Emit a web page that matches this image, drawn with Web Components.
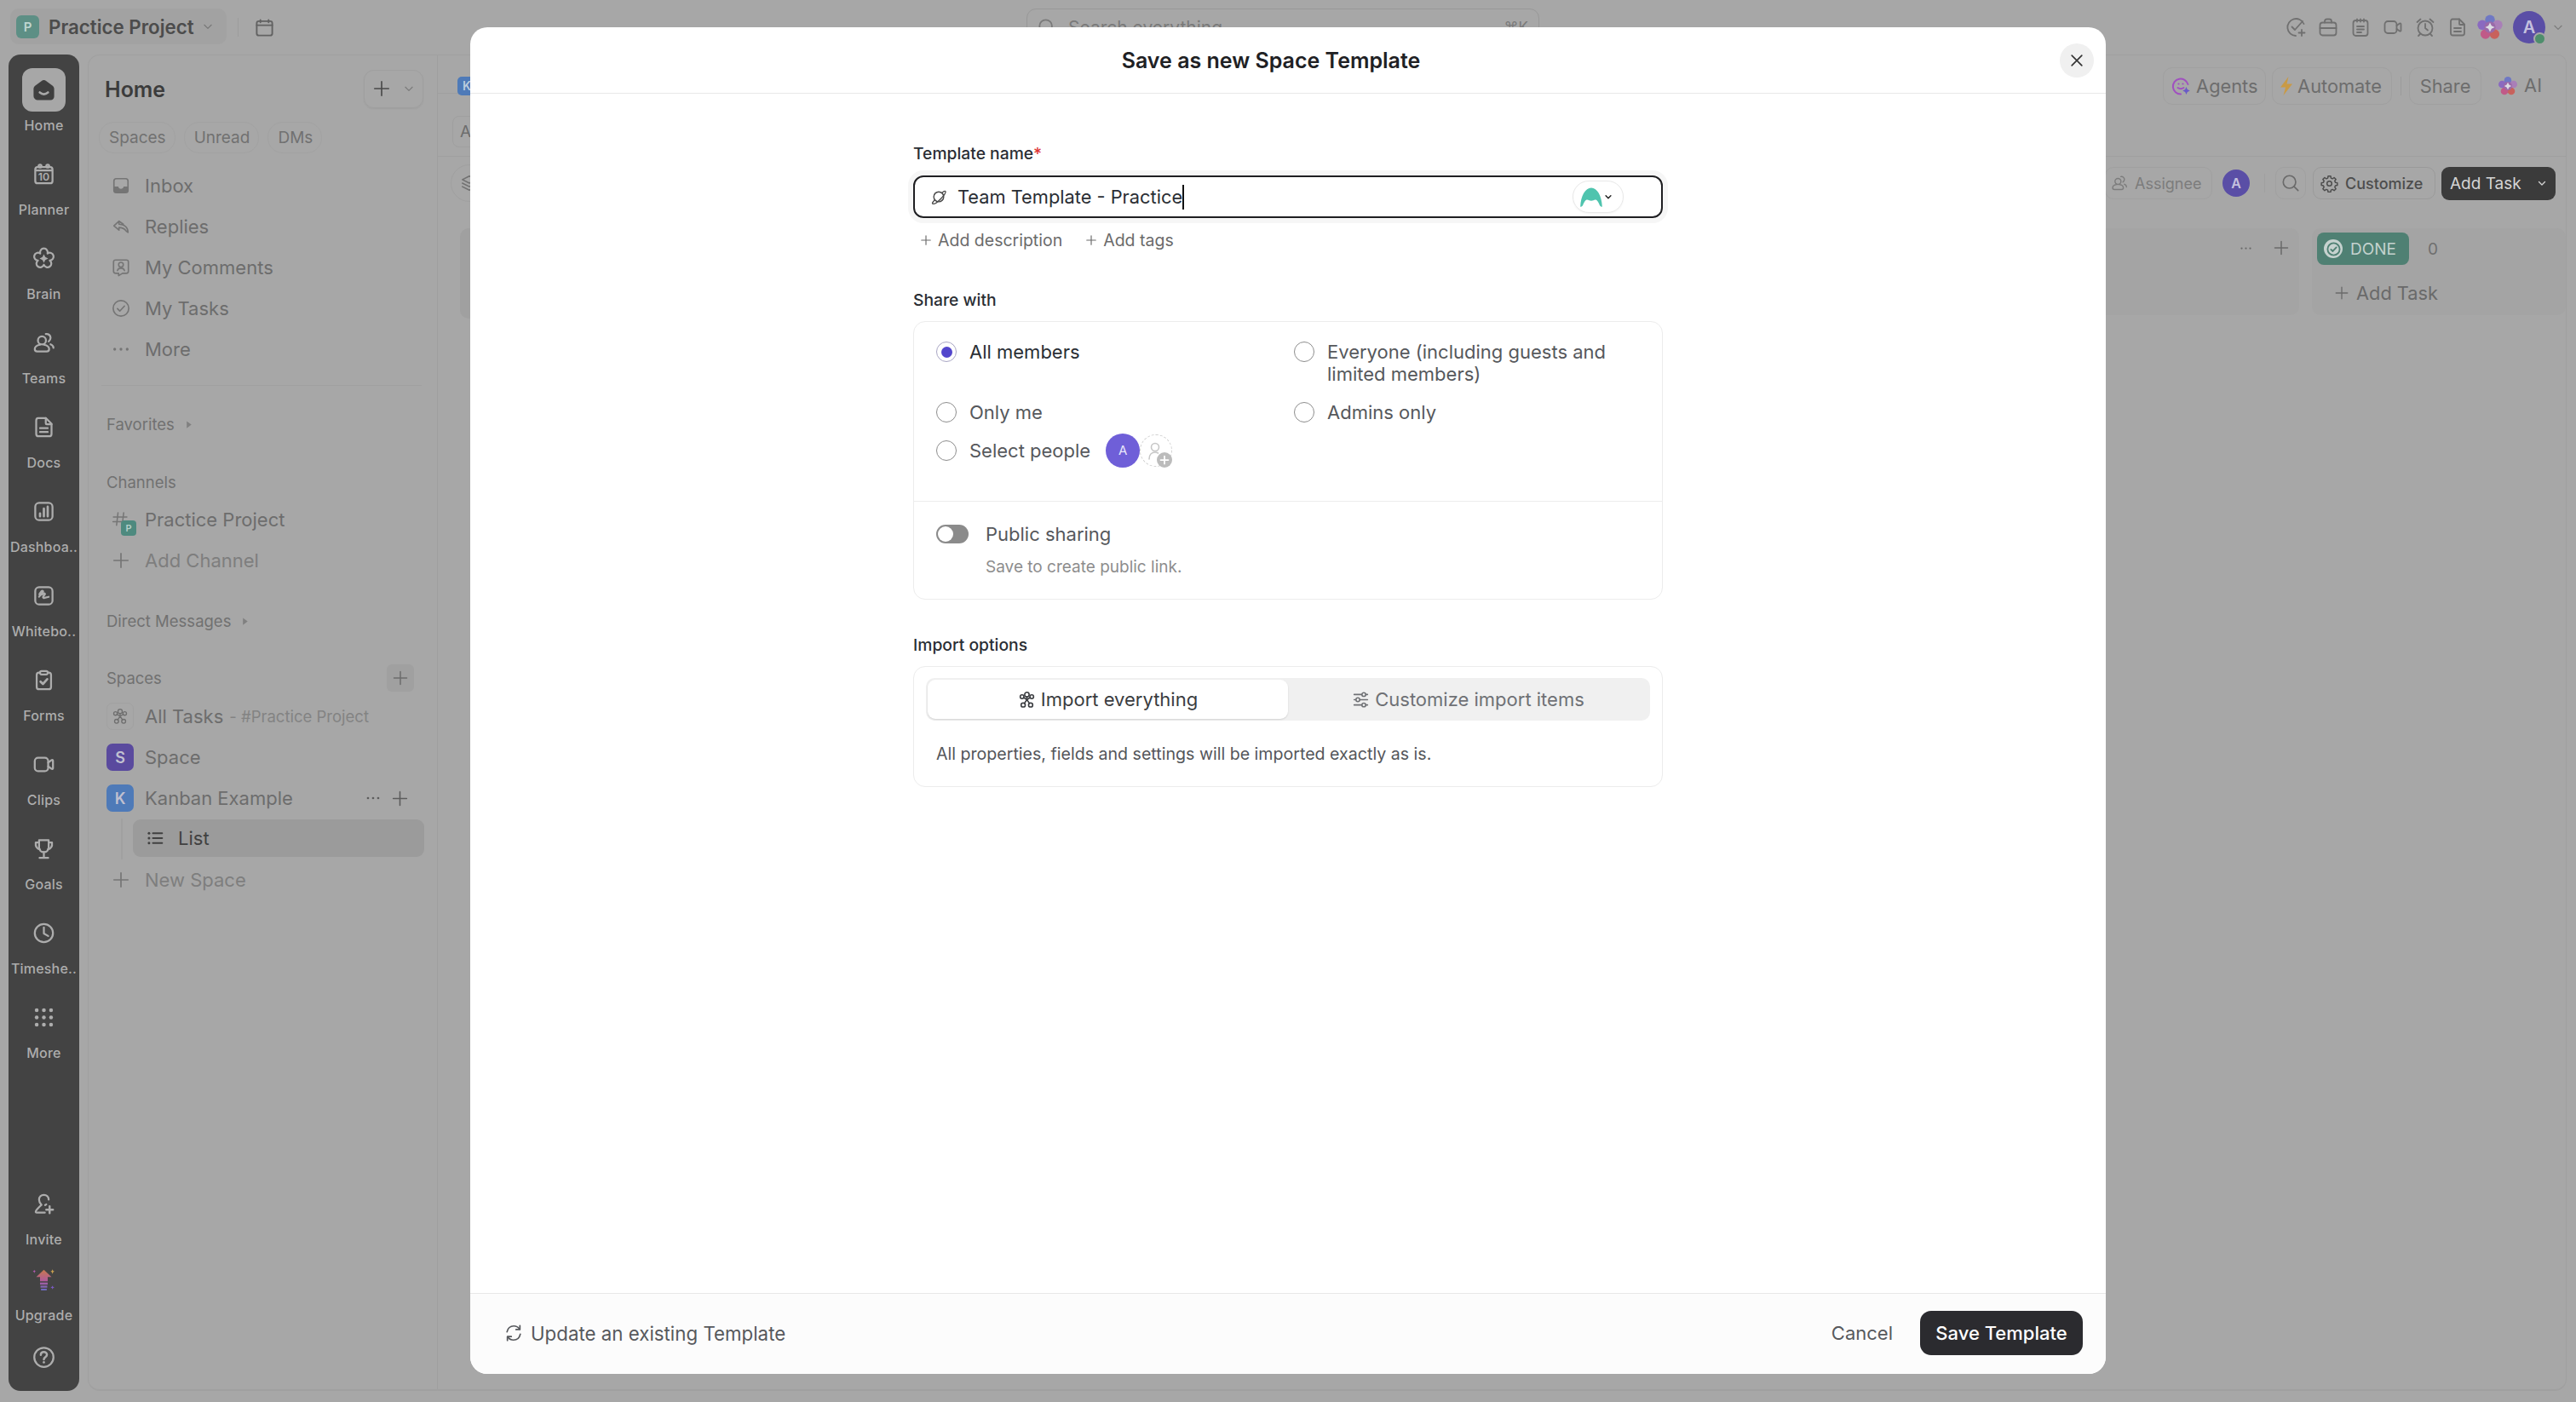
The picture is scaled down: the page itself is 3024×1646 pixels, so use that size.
<!DOCTYPE html>
<html lang="en">
<head>
<meta charset="utf-8">
<title>Save as new Space Template</title>
<style>
  html, body { margin: 0; width: 3024px; height: 1646px; overflow: hidden; background: #a7a7a7; font-family: Inter, "Liberation Sans", sans-serif; }
</style>
</head>
<body>
<app-page></app-page>
<script>
// petals of the brain logo, outlined
function flower(cx, cy, n, R, rise) {
    let d = "";
    for (let i = 0; i < n; i++) {
        const a = (i / n) * Math.PI * 2 - Math.PI / 2 - Math.PI / n;
        const b = ((i + 1) / n) * Math.PI * 2 - Math.PI / 2 - Math.PI / n;
        const p = [cx + R * Math.cos(a), cy + R * Math.sin(a)].map(v => v.toFixed(2));
        const q = [cx + R * Math.cos(b), cy + R * Math.sin(b)].map(v => v.toFixed(2));
        d += (i === 0 ? `M${p[0]} ${p[1]}` : "") + `A${rise} ${rise} 0 1 1 ${q[0]} ${q[1]}`;
    }
    return d + "Z";
}

const ICONS = {
    home: `<path fill="currentColor" stroke="none" d="M12 2.5c.8 0 1.500.3 2.100.8l6.200 4.600c1 .8 1.700 1.800 1.700 3.100v7.500c0 2-1.500 3.500-3.500 3.500h-13C3.500 21.500 2 20 2 18v-7c0-1.300.7-2.300 1.700-3.100l6.200-4.600c.6-.5 1.300-.8 2.100-.8z"/><path stroke="#a7a7a7" stroke-width="2.200" d="M8 14.500q4 3.500 8 0"/>`,
    planner: `<rect x="3" y="4.500" width="18" height="17" rx="2.500"/><path d="M3.500 8h17"/><circle cx="8" cy="3.500" r="1.500"/><circle cx="16" cy="3.500" r="1.500"/><text x="12" y="19" font-size="11" font-weight="600" text-anchor="middle" fill="currentColor" stroke="none" font-family="Inter, sans-serif">10</text>`,
    brain: `<path d="${flower(12, 12, 5, 6.500, 4)}"/><path fill="currentColor" stroke="none" d="M12 7.500l1.500 3 3 1.500-3 1.500-1.500 3-1.500-3-3-1.500 3-1.500z"/>`,
    teams: `<circle cx="10" cy="9.500" r="4.200"/><path d="M8 14c-3 .5-5.500 2-5.500 4.500 0 1.500 1 2.500 2.500 2.500h10c1.500 0 2.500-1 2.500-2.500 0-2.500-2.500-4-5.500-4.500"/><path d="M14 2.800c2.500-.5 5 1.200 5 3.900 0 1.700-1 3-2 3.800"/><path d="M19 13.500c1.500.6 3 1.800 3 3.800"/>`,
    doc: `<path d="M6 2.500h8l6 6V19c0 1.500-1 2.500-2.500 2.500h-11C5 21.500 4 20.500 4 19V5c0-1.500.8-2.500 2-2.500z"/><path d="M14 2.500V8c0 .5.300 1 1 1h5M8 13h8M8 17h8"/>`,
    dash: `<rect x="3" y="3" width="18" height="18" rx="4"/><path stroke-width="2.400" d="M8 17v-3M12 17V9M16 17V7"/>`,
    board: `<rect x="3" y="3" width="18" height="18" rx="4"/><path d="M7 13l4-5c.8-1-.8-1.600-1.500-.8L7.500 10c-.5.800.5 1.500 1.300 1l3.200-1.500c1-.4 1.500.6.800 1.300l-1.500 2c-.7 1 .3 1.700 1.300 1.300l4.400-1"/>`,
    forms: `<path d="M8 4H7C5.500 4 4.500 5 4.500 6.500V19c0 1.500 1 2.500 2.500 2.500h10c1.500 0 2.500-1 2.500-2.500V6.500C19.500 5 18.500 4 17 4h-1"/><rect x="8" y="2.500" width="8" height="3.500" rx="1.500"/><path stroke-width="2.400" d="M8.500 13.500l2.500 2.500 4.500-5"/>`,
    video: `<rect x="2.500" y="5" width="14" height="14" rx="3.500"/><path d="M16.500 10l3.500-2.500c.8-.5 1.500 0 1.500.8v7.400c0 .8-.7 1.300-1.500.8L16.500 14"/>`,
    goals: `<path d="M7 3h10v7.500c0 3-2.200 5-5 5s-5-2-5-5z"/><path d="M7 5.500H3.500C3 10 4.500 12 8 12.800M17 5.500h3.500c.5 4.500-1 6.500-4.500 7.300M12 15.500V21M7.500 21.500h9"/>`,
    clock: `<circle cx="12" cy="12" r="9.500"/><path d="M12 6v6.500l4.500 2.500"/>`,
    grid: `<g fill="currentColor" stroke="none">${[4.500, 12, 19.500].map(y => [4.500, 12, 19.500].map(x => `<circle cx="${x}" cy="${y}" r="2"/>`).join("")).join("")}</g>`,
    invite: `<path d="M17 7.500C17 4.500 14.800 2.500 12 2.500S7 4.500 7 7.500c0 2.500 1.500 4.500 2.500 5.500-1 .8-6.500 6-6 7.500.2.500.8.500 1.500.500h8"/><path d="M14.500 12.500c-.3.3-.7.5-1.200.7"/><path stroke-width="2.200" d="M18 14.500v7M14.500 18h7"/>`,
    help: `<circle cx="12" cy="12" r="10"/><path stroke-width="2.200" d="M8.800 9.500c0-1.900 1.400-3 3.200-3s3.200 1.200 3.200 2.800c0 2.500-3.200 2.500-3.200 5"/><circle cx="12" cy="17.300" r="1.200" fill="currentColor" stroke="none"/>`,
    upgrade: `<defs><linearGradient id="ug" x1="0" y1="0" x2="0" y2="1"><stop offset="0" stop-color="#c8794c"/><stop offset=".55" stop-color="#b05a9c"/><stop offset="1" stop-color="#6a6ac0"/></linearGradient></defs><path fill="url(#ug)" stroke="none" d="M12 1.500L20 9h-4v4.500H8V9H4zM8 14.800h8v2.200H8zM8.500 18.300h7v2H8.500zM9 21.300h6V23H9z"/><path fill="#c8a050" stroke="none" d="M21 1l.7 1.700 1.300.6-1.300.7L21 6l-.7-2-1.300-.7 1.300-.6z"/><path fill="#b05ab0" stroke="none" d="M2 1.500l.5 1.200 1 .5-1 .5L2 5l-.5-1.300-1-.5 1-.5z"/><path fill="#7a5ac0" stroke="none" d="M21 18l.6 1.400 1.400.6-1.400.6L21 22l-.6-1.400-1.400-.6 1.400-.6z"/>`,
    inbox: `<path d="M6 3h12c1.700 0 3 1.300 3 3v12c0 1.700-1.300 3-3 3H6c-1.700 0-3-1.300-3-3V6c0-1.700 1.300-3 3-3z"/><path fill="currentColor" stroke="none" d="M3 13h5.500c.6 2 1.800 3 3.500 3s2.900-1 3.500-3H21v5c0 1.700-1.300 3-3 3H6c-1.700 0-3-1.300-3-3z"/>`,
    reply: `<path d="M9.500 5L3 11l6.500 5.500v-3.200c4 0 6.500.8 9 4.200.8 1 2.500 2 2.500 2 0-6-4-10.500-11.500-10.500z"/><path d="M10 5.500L15 9"/>`,
    comments: `<path d="M5 2.500h14c1.500 0 2.500 1 2.500 2.500v12c0 1.500-1 2.500-2.500 2.500h-5L9 22.500v-3H5c-1.500 0-2.500-1-2.500-2.500V5c0-1.500 1-2.500 2.500-2.500z"/><circle cx="12" cy="8.500" r="3"/><path d="M7.500 16c.5-2 2.300-3 4.500-3s4 1 4.500 3"/>`,
    tick: `<circle cx="12" cy="12" r="10"/><path d="M7.500 12.500l3 3 6-6.500"/>`,
    dots: `<g fill="currentColor" stroke="none"><circle cx="4" cy="12" r="1.800"/><circle cx="12" cy="12" r="1.800"/><circle cx="20" cy="12" r="1.800"/></g>`,
    plus: `<path d="M12 3v18M3 12h18"/>`,
    chev: `<path d="M5 9l7 7 7-7"/>`,
    hash: `<path d="M9 2.500L7 20M17 2.500l-2 17M2.500 8.500h19M2 15h15"/>`,
    spark: `<circle cx="12" cy="5" r="3"/><circle cx="5.500" cy="8" r="2.500"/><circle cx="18.500" cy="8" r="2.500"/><circle cx="7" cy="19" r="2.800"/><circle cx="17" cy="19" r="2.800"/><path d="M12 8v4M7.500 9l4.500 3 4.500-3M12 12l-3.500 5M12 12l3.500 5"/>`,
    list: `<g fill="currentColor" stroke="none"><circle cx="3.500" cy="5" r="1.800"/><circle cx="3.500" cy="12" r="1.800"/><circle cx="3.500" cy="19" r="1.800"/></g><path stroke-width="2.400" d="M9 5h13M9 12h13M9 19h13"/>`,
    calendar: `<rect x="2.500" y="4" width="19" height="17.500" rx="2.500"/><path d="M2.500 9h19M7 2.500v3M17 2.500v3"/>`,
    search: `<circle cx="10.500" cy="10.500" r="8"/><path d="M16.500 16.500l5 5"/>`,
    stack: `<path d="M12 3l9 4.500-9 4.500-9-4.500zM3 12l9 4.500 9-4.500M3 16.500L12 21l9-4.500"/>`,
    checkplus: `<path d="M21.500 8A10 10 0 1 0 12 22"/><path d="M7.500 11.500l3.500 3.500 9-10"/><path d="M19 15v7M15.500 18.500h7"/>`,
    brief: `<rect x="2.500" y="6.500" width="19" height="15" rx="3"/><path d="M8 6.500V5c0-1.500 1-2.500 2.500-2.500h3C15 2.500 16 3.500 16 5v1.500M2.500 13h19"/>`,
    note: `<rect x="3.500" y="4" width="17" height="18" rx="3"/><path d="M8 2.500v3M12 2.500v3M16 2.500v3M8 11h8M8 14.500h8M8 18h5"/>`,
    alarm: `<circle cx="12" cy="13" r="8.500"/><path d="M12 8v5l3 2.500M2.500 6l4-3.500M21.500 6l-4-3.500M6 20l-2 2M18 20l2 2"/>`,
    gear: `<circle cx="12" cy="12" r="3.200"/><path d="M10.300 2.500h3.400l.5 2.700 1.900.8 2.300-1.500 2.300 2.300-1.500 2.300.8 1.900 2.700.5v3.400l-2.700.5-.8 1.900 1.500 2.300-2.300 2.300-2.300-1.500-1.900.8-.5 2.700h-3.400l-.5-2.700-1.900-.8-2.300 1.500-2.300-2.300 1.500-2.300-.8-1.900-2.700-.5v-3.400l2.700-.5.8-1.900-1.500-2.300 2.300-2.300 2.300 1.500 1.900-.8z" transform="translate(0 -.500)"/>`,
    close: `<path d="M5 5l14 14M19 5L5 19"/>`,
    planet: `<circle cx="12" cy="12" r="7"/><path d="M6.500 16.500C3.500 19.500 2.500 21 3.500 21.800c1.500 1 6-1.500 11-6.500s8-9.500 6.800-11C20.500 3.500 19 4.200 16.500 6.500"/>`,
    sync: `<path d="M3.500 10.500C4.500 6 8 3 12.200 3c3 0 5.600 1.500 7.300 3.800"/><path d="M20 2.500v5h-5"/><path d="M20.500 13.500C19.500 18 16 21 11.800 21c-3 0-5.600-1.500-7.300-3.800"/><path d="M4 21.500v-5h5"/>`,
    sliders: `<path d="M3 5h10M19 5h2M3 12h2M11 12h10M3 19h10M19 19h2"/><circle cx="16" cy="5" r="2.500"/><circle cx="8" cy="12" r="2.500"/><circle cx="16" cy="19" r="2.500"/>`,
    personadd: `<circle cx="11" cy="8" r="4.500"/><path d="M4 22c0-5 3-8 7-8 1.500 0 2.500.4 3.500 1"/>`,
    bolt: `<path fill="#c99a45" stroke="none" d="M14.500 1L5 13.500h6L8.500 23 19 9.500h-6.500z"/>`,
    agent: `<path stroke="#a050c0" d="M20.500 10a9 9 0 1 0-8.500 11.500"/><circle cx="9.500" cy="9.500" r="1.100" fill="#a050c0" stroke="none"/><circle cx="14.500" cy="9.500" r="1.100" fill="#a050c0" stroke="none"/><path stroke="#a050c0" d="M8.500 14q3.500 2.500 7 0"/><path fill="#6a5ac8" stroke="none" d="M18.500 13l1.300 3 3 1.500-3 1.500-1.300 3-1.300-3-3-1.500 3-1.500z"/>`,
    logo: `<g stroke="none"><circle cx="12" cy="5.400" r="4.300" fill="#6f78c4"/><circle cx="18.700" cy="10" r="4.300" fill="#a97fb8"/><circle cx="16" cy="18" r="4.300" fill="#c8625c"/><circle cx="8" cy="18" r="4.300" fill="#c05a88"/><circle cx="5.300" cy="10" r="4.300" fill="#8a6ac0"/><circle cx="12" cy="12" r="5" fill="#9a6aa8"/><path fill="#dcdce4" d="M12 7.800l1.400 2.800 2.800 1.400-2.800 1.400-1.400 2.800-1.400-2.800L7.800 12l2.800-1.400z"/></g>`,
    mountain: `<path fill="#4fc4ae" stroke="none" d="M1 22C1.500 11 6 3 12 3s10.500 8 11 19c-1.200 0-2-.5-2.500-1.500-1-2.500-2.500-5-3.800-5.500-1.500-.5-3 1-4.700 1s-3.200-1.500-4.700-1c-1.300.5-2.800 3-3.800 5.500C3 21.500 2.200 22 1 22z"/>`,
    caret: `<path fill="currentColor" stroke="none" d="M7 3l12 9-12 9z"/>`
};

class UiIcon extends HTMLElement {
    connectedCallback() {
        const size = this.getAttribute("size") || 26;
        const sw = this.getAttribute("sw") || 2;
        this.attachShadow({mode: "open"}).innerHTML = `
            <style>:host{display:inline-flex;flex:none;align-items:center;justify-content:center;}svg{display:block;}</style>
            <svg width="${size}" height="${size}" viewBox="0 0 24 24" fill="none" stroke="currentColor" stroke-width="${sw}" stroke-linecap="round" stroke-linejoin="round">${ICONS[this.getAttribute("name")] || ""}</svg>`;
    }
}
customElements.define("ui-icon", UiIcon);

class TopBar extends HTMLElement {
    connectedCallback() {
        const tools = ["checkplus", "brief", "note", "video", "alarm", "doc"];
        this.attachShadow({mode: "open"}).innerHTML = `
            <style>
                :host { display: grid; grid-template-columns: 1205px 602px 1fr; height: 64px; color: #585858; }
                .left { display: flex; align-items: center; padding-left: 12px; }
                .ws { display: flex; align-items: center; height: 42px; margin-top: -2px; padding-left: 7px; box-sizing: border-box; background: #a2a2a2; border-radius: 10px; font-size: 22.300px; font-weight: 600; color: #4c4c4c; white-space: nowrap; width: 254px; }
                .p { width: 27px; height: 27px; margin-right: 11px; border-radius: 6px; background: #5d8f85; color: #bfd5d0; font-size: 15px; font-weight: 600; display: flex; align-items: center; justify-content: center; }
                .ws ui-icon { margin-left: 9px; color: #787878; }
                .sep { width: 1px; height: 22px; margin-left: 13px; background: #9c9c9c; }
                .cal { margin-left: 19px; color: #626262; }
                .search { margin-top: 10px; height: 44px; border: 1px solid #989898; border-radius: 11px; box-sizing: border-box; display: flex; align-items: center; padding: 0 12px; gap: 14px; color: #7a7a7a; font-size: 21px; }
                .search .k { margin-left: auto; font-size: 17px; }
                .right { display: flex; align-items: center; justify-content: flex-end; padding-right: 2px; }
                .right ui-icon { width: 38px; }
                .tool { color: #707070; }
                .ava { position: relative; width: 38px; height: 38px; margin-left: 8px; border-radius: 50%; background: #5a4ea6; color: #c4c0de; display: flex; align-items: center; justify-content: center; font-size: 20px; font-weight: 600; }
                .dot { position: absolute; right: -1px; bottom: -2px; width: 11px; height: 11px; border-radius: 50%; background: #4e8e6c; border: 2px solid #a7a7a7; }
                .chev { margin-left: -4px; color: #7c7c7c; }
            </style>
            <div class="left">
                <div class="ws"><span class="p">P</span>Practice Project<ui-icon name="chev" size="14"></ui-icon></div>
                <span class="sep"></span>
                <ui-icon class="cal" name="calendar" size="23"></ui-icon>
            </div>
            <div class="search"><ui-icon name="search" size="22"></ui-icon>Search everything...<span class="k">⌘K</span></div>
            <div class="right">
                ${tools.map(t => `<ui-icon class="tool" name="${t}" size="24" sw="1.800"></ui-icon>`).join("")}
                <ui-icon name="logo" size="32"></ui-icon>
                <div class="ava">A<span class="dot"></span></div>
                <ui-icon class="chev" name="chev" size="14"></ui-icon>
            </div>`;
    }
}
customElements.define("top-bar", TopBar);

class RailItem extends HTMLElement {
    connectedCallback() {
        const active = this.hasAttribute("active");
        const h = this.getAttribute("h") || 99;
        this.attachShadow({mode: "open"}).innerHTML = `
            <style>
                :host { display: flex; flex-direction: column; align-items: center; height: ${h}px; flex: none; color: #adadad; }
                .ico { width: 51px; height: 51px; margin-top: 8px; display: flex; align-items: center; justify-content: center; border-radius: 12px; }
                .ico.on { background: #a7a7a7; color: #3f3f3f; }
                .lbl { height: 20px; margin-top: 6px; line-height: 20px; font-size: 16px; font-weight: 500; white-space: nowrap; letter-spacing: .2px; }
            </style>
            <div class="ico ${active ? "on" : ""}"><ui-icon name="${this.getAttribute("icon")}" size="${active ? 29 : 27}"></ui-icon></div>
            <div class="lbl"><slot></slot></div>`;
    }
}
customElements.define("rail-item", RailItem);

class NavRail extends HTMLElement {
    connectedCallback() {
        this.attachShadow({mode: "open"}).innerHTML = `
            <style>
                :host { display: flex; flex-direction: column; width: 83px; margin: 0 10px; background: #434343; border-radius: 14px; padding-top: 8px; box-sizing: border-box; overflow: hidden; }
                .bottom { margin-top: auto; display: flex; flex-direction: column; align-items: center; color: #adadad; }
                .help { height: 75px; display: flex; align-items: flex-start; padding-top: 22px; box-sizing: border-box; }
            </style>
            <slot></slot>
            <div class="bottom"><slot name="bottom"></slot>
                <div class="help"><ui-icon name="help" size="27"></ui-icon></div>
            </div>`;
    }
}
customElements.define("nav-rail", NavRail);

class NavRow extends HTMLElement {
    connectedCallback() {
        const badge = this.getAttribute("badge");
        const icon = this.getAttribute("icon");
        const tone = this.getAttribute("tone") || "#6d6d6d";
        let lead = "";
        if (badge) lead = `<span class="badge" style="background:${this.getAttribute("color")}">${badge}</span>`;
        else if (this.hasAttribute("boxed")) lead = `<span class="box"><ui-icon name="${icon}" size="20" sw="1.600"></ui-icon></span>`;
        else lead = `<ui-icon class="ic" name="${icon}" size="${this.getAttribute("size") || 22}" sw="1.800"></ui-icon>`;
        this.attachShadow({mode: "open"}).innerHTML = `
            <style>
                :host { display: flex; align-items: center; height: ${this.getAttribute("h") || 48}px; color: ${tone}; font-size: 22px; white-space: nowrap; }
                .lead { width: 66px; padding-left: 21px; box-sizing: border-box; display: flex; align-items: center; justify-content: flex-start; position: relative; }
                .ic { margin-left: 6px; color: #757575; }
                .badge { width: 32px; height: 32px; border-radius: 7px; color: #c0c0d0; font-size: 18px; font-weight: 600; display: flex; align-items: center; justify-content: center; }
                .box { width: 32px; height: 32px; border: 1px solid #a1a1a1; border-radius: 7px; box-sizing: border-box; display: flex; align-items: center; justify-content: center; color: #6e6e6e; }
                .end { margin-left: auto; display: flex; align-items: center; }
            </style>
            <span class="lead">${lead}<slot name="over"></slot></span>
            <slot></slot>
            <span class="end"><slot name="end"></slot></span>`;
    }
}
customElements.define("nav-row", NavRow);

class SideBar extends HTMLElement {
    connectedCallback() {
        this.attachShadow({mode: "open"}).innerHTML = `
            <style>
                :host { display: block; width: 410px; flex: none; border-right: 1px solid #9f9f9f; box-sizing: border-box; }
                .head { display: flex; align-items: center; justify-content: space-between; height: 80px; margin-top: 0; margin-bottom: -2px; padding: 0 16px 0 19px; font-size: 25px; font-weight: 600; color: #3c3c3c; }
                .add { width: 70px; height: 45px; margin-top: -2px; border: 1px solid #9f9f9f; border-radius: 12px; box-sizing: border-box; box-shadow: 0 1px 2px rgba(0,0,0,.06); display: flex; align-items: center; justify-content: center; gap: 14px; color: #4a4a4a; }
                .add ui-icon + ui-icon { color: #7b7b7b; }
                .chips { display: flex; gap: 10px; margin: -1px 0 0 12px; }
                .chip { height: 35px; padding: 0 10px 0 11px; display: flex; align-items: center; border: 1px solid #a2a2a2; border-radius: 18px; font-size: 19px; font-weight: 400; color: #717171; }
                .nav { margin-top: 14px; }
                .rule { height: 1px; margin: 18px 18px 0 15px; background: #a0a0a0; }
                .sec { display: flex; align-items: center; height: 36px; padding: 0 20px 0 21px; font-size: 18.500px; font-weight: 400; color: #717171; gap: 11px; }
                .sec .tile { margin-left: auto; width: 32px; height: 32px; border-radius: 6px; background: #a0a0a0; display: flex; align-items: center; justify-content: center; margin-right: 7px; color: #6c6c6c; }
                .caret { color: #808080; }
                .sub { font-size: 18.500px; color: #838383; margin-left: 7px; }
                .mini { position: absolute; left: 38px; top: 11px; width: 18px; height: 18px; border-radius: 4px; background: #4e8a7f; color: #b5d0ca; font-size: 11px; font-weight: 600; display: flex; align-items: center; justify-content: center; }
                .listwrap { margin-left: 38px; padding-left: 12px; border-left: 2px solid #a0a0a0; margin-right: 15px; padding-top: 1px; padding-bottom: 3px; }
                .list { display: flex; align-items: center; height: 44px; border-radius: 9px; background: #9b9b9b; color: #414141; font-size: 22px; padding-left: 16px; gap: 17px; }
                .act { display: flex; gap: 12px; align-items: center; color: #5c5c5c; padding-right: 33px; }
            </style>
            <div class="head">Home<div class="add"><ui-icon name="plus" size="22" sw="1.800"></ui-icon><ui-icon name="chev" size="14"></ui-icon></div></div>
            <div class="chips"><span class="chip">Spaces</span><span class="chip">Unread</span><span class="chip">DMs</span></div>
            <div class="nav">
                <nav-row icon="inbox">Inbox</nav-row>
                <nav-row icon="reply">Replies</nav-row>
                <nav-row icon="comments">My Comments</nav-row>
                <nav-row icon="tick">My Tasks</nav-row>
                <nav-row icon="dots">More</nav-row>
            </div>
            <div class="rule"></div>
            <div class="sec" style="height:48px;margin-top:21px">Favorites<ui-icon class="caret" name="caret" size="11"></ui-icon></div>
            <div class="sec" style="margin-top:26px">Channels</div>
            <div style="margin-top:2px">
                <nav-row icon="hash" size="20">Practice Project<span slot="over" class="mini">P</span></nav-row>
                <nav-row icon="plus" tone="#7e7e7e">Add Channel</nav-row>
            </div>
            <div class="sec" style="margin-top:29px">Direct Messages<ui-icon class="caret" name="caret" size="11"></ui-icon></div>
            <div class="sec" style="margin-top:31px">Spaces<span class="tile"><ui-icon name="plus" size="20" sw="1.800"></ui-icon></span></div>
            <div style="margin-top:3px">
                <nav-row icon="spark" boxed>All Tasks<span class="sub">- #Practice Project</span></nav-row>
                <nav-row badge="S" color="#5a4a9e">Space</nav-row>
                <nav-row badge="K" color="#4e7ab8">Kanban Example<span slot="end" class="act"><ui-icon name="dots" size="18"></ui-icon><ui-icon name="plus" size="21" sw="1.800"></ui-icon></span></nav-row>
                <div class="listwrap"><div class="list"><ui-icon name="list" size="20"></ui-icon>List</div></div>
                <nav-row icon="plus" tone="#7e7e7e">New Space</nav-row>
            </div>`;
    }
}
customElements.define("side-bar", SideBar);

class MainView extends HTMLElement {
    connectedCallback() {
        this.attachShadow({mode: "open"}).innerHTML = `
            <style>
                :host { display: flex; flex-direction: column; flex: 1; min-width: 0; color: #6d6d6d; font-size: 21.800px; }
                .head { display: flex; justify-content: space-between; height: 118px; border-bottom: 1px solid #9f9f9f; box-sizing: content-box; }
                .crumb { width: 48px; }
                .crumb .a { height: 45px; border-bottom: 1px solid #9f9f9f; box-sizing: border-box; padding: 25px 0 0 23px; }
                .k { width: 24px; height: 22px; border-radius: 5px 0 0 5px; background: #4e7ab8; color: #bcd; font-size: 14px; font-weight: 600; display: block; padding-left: 6px; box-sizing: border-box; line-height: 22px; }
                .crumb .b { margin: 26px 0 0 17px; height: 37px; width: 40px; border: 1px solid #9f9f9f; border-radius: 8px; box-sizing: border-box; padding-left: 8px; font-size: 19px; line-height: 35px; }
                .acts { display: flex; align-items: center; height: 72px; padding-right: 28px; }
                .chip { height: 44px; padding: 0 9px 0 8px; display: flex; align-items: center; gap: 6px; border: 1px solid #a0a0a0; border-radius: 11px; box-sizing: border-box; white-space: nowrap; }
                .vr { width: 1px; height: 22px; background: #9b9b9b; margin: 0 9px 0 10px; }
                .tools { display: flex; justify-content: space-between; height: 66px; margin-top: -2px; }
                .circ { width: 44px; height: 44px; margin: 11px 0 0 15px; border: 1px solid #a0a0a0; border-radius: 50%; display: flex; align-items: center; justify-content: center; box-sizing: border-box; color: #707070; }
                .right { display: flex; align-items: center; padding-right: 12px; font-size: 18px; height: 66px; }
                .small { height: 38px; border-radius: 10px; padding: 0 8px; gap: 8px; }
                .customize { border-color: #9a9a9a; color: #4d4d4d; font-weight: 500; }
                .ava { width: 32px; height: 32px; border-radius: 50%; background: #5a4ea6; color: #c4c0de; font-size: 16px; font-weight: 600; display: flex; align-items: center; justify-content: center; margin: 0 17px 0 12px; }
                .addtask { height: 39px; display: flex; align-items: center; margin-left: 7px; background: #3b3b3b; border-radius: 9px; color: #d4d4d4; font-size: 19px; width: 134px; box-sizing: border-box; padding-left: 10px; gap: 18px; white-space: nowrap; }
                .board { display: flex; justify-content: space-between; padding-top: 20px; }
                .col0 { width: 26px; height: 106px; margin-left: 26px; background: #a0a0a0; border-radius: 10px 0 0 10px; }
                .cols { display: flex; gap: 15px; }
                .col { height: 102px; background: #a4a4a4; border-radius: 10px; }
                .col1 { width: 260px; display: flex; align-items: flex-start; justify-content: flex-end; gap: 24px; padding: 12px 11px 0 0; box-sizing: border-box; color: #6a6a6a; height: 102px; }
                .col2 { width: 298px; padding: 5px 0 0 6px; box-sizing: border-box; }
                .st { display: flex; align-items: center; gap: 22px; color: #6f6f6f; font-size: 19px; }
                .done { display: flex; align-items: center; gap: 9px; width: 108px; height: 38px; padding-left: 8px; box-sizing: border-box; background: #4f8073; color: #c4d2ce; border-radius: 8px; font-size: 19px; }
                .chk { width: 22px; height: 22px; border-radius: 50%; background: #c6d2cf; color: #4f8073; display: flex; align-items: center; justify-content: center; }
                .new { display: flex; align-items: center; gap: 8px; margin: 20px 0 0 20px; color: #6a6a6a; }
            </style>
            <div class="head">
                <div class="crumb"><div class="a"><span class="k">K</span></div><div class="b">A</div></div>
                <div class="acts" style="align-self:flex-start">
                    <div class="chip" style="width:121px"><ui-icon name="agent" size="24"></ui-icon><span>Agents</span></div>
                    <div class="chip" style="width:141px;margin-left:7px;gap:1px;padding-left:4px"><ui-icon name="bolt" size="24"></ui-icon><span>Automate</span></div>
                    <span class="vr"></span>
                    <div class="chip" style="width:85px;justify-content:center;padding:0">Share</div>
                    <ui-icon name="logo" size="24" style="margin:0 7px 0 19px"></ui-icon><span style="margin-top:-2px">AI</span>
                </div>
            </div>
            <div class="tools">
                <div class="circ"><ui-icon name="stack" size="22" sw="1.600"></ui-icon></div>
                <div class="right">
                    <div class="chip small" style="width:126px;color:#7c7c7c;padding-left:6px"><ui-icon name="teams" size="20" sw="1.700"></ui-icon>Assignee</div>
                    <span class="ava">A</span>
                    <span class="vr" style="margin:0 12px 0 0;background:#9f9f9f"></span>
                    <div class="chip small" style="width:36px;padding:0;justify-content:center;color:#6a6a6a"><ui-icon name="search" size="22" sw="1.800"></ui-icon></div>
                    <div class="chip small customize" style="width:144px;margin-left:8px"><ui-icon name="gear" size="21" sw="1.700"></ui-icon>Customize</div>
                    <div class="addtask">Add Task<ui-icon name="chev" size="12" sw="2.600"></ui-icon></div>
                </div>
            </div>
            <div class="board">
                <div class="col0"></div>
                <div class="cols">
                    <div class="col col1"><ui-icon name="dots" size="15" style="margin-top:4px"></ui-icon><ui-icon name="plus" size="20" sw="1.800" style="margin-top:1px"></ui-icon></div>
                    <div class="col col2">
                        <div class="st"><span class="done"><span class="chk"><ui-icon name="tick" size="17" sw="2.600"></ui-icon></span>DONE</span>0</div>
                        <div class="new"><ui-icon name="plus" size="18" sw="1.800"></ui-icon>Add Task</div>
                    </div>
                </div>
            </div>`;
    }
}
customElements.define("main-view", MainView);

class ShareOption extends HTMLElement {
    connectedCallback() {
        const on = this.hasAttribute("checked");
        this.attachShadow({mode: "open"}).innerHTML = `
            <style>
                :host { display: flex; align-items: flex-start; gap: 15px; font-size: 22px; line-height: 26px; color: ${on ? "#2a2e34" : "#56585c"}; }
                .r { width: 24px; height: 24px; flex: none; margin-top: 1px; border-radius: 50%; border: 1.500px solid ${on ? "#a9a6c4" : "#8d8d8d"}; box-sizing: border-box; display: flex; align-items: center; justify-content: center; }
                .r i { width: 13px; height: 13px; border-radius: 50%; background: #5346cc; display: ${on ? "block" : "none"}; }
            </style>
            <span class="r"><i></i></span><span><slot></slot></span>`;
    }
}
customElements.define("share-option", ShareOption);

class SaveDialog extends HTMLElement {
    connectedCallback() {
        this.attachShadow({mode: "open"}).innerHTML = `
            <style>
                :host { position: absolute; left: 552px; top: 32px; width: 1920px; height: 1581px; display: flex; flex-direction: column; background: #fff; border-radius: 20px; overflow: hidden; color: #2a2e34; font-family: Inter, "Liberation Sans", sans-serif; }
                header { display: flex; align-items: center; height: 77px; flex: none; border-bottom: 1px solid #e8e8e8; box-sizing: content-box; padding: 0 14px; }
                h1 { flex: 1; margin: 0; text-align: center; font-size: 25px; font-weight: 600; color: #202124; padding-left: 0; padding-right: 0; }
                .close { width: 40px; height: 40px; border-radius: 50%; background: #f0f0f0; display: flex; align-items: center; justify-content: center; color: #333; }
                main { flex: 1; width: 880px; margin: 0 auto; padding-top: 58px; box-sizing: content-box; }
                .label { height: 24px; line-height: 24px; font-size: 19.300px; font-weight: 500; color: #2a2e34; }
                .label b { color: #d33; font-weight: 500; }
                .input { display: flex; align-items: center; height: 50px; margin-top: 14px; border: 2px solid #1f1f22; border-radius: 12px; box-shadow: 0 0 0 6px #f6f6f6; box-sizing: border-box; font-size: 21.800px; color: #2a2e34; padding-left: 18px; position: relative; }
                .input .pl { color: #4a4a4a; margin-right: 12px; }
                .caret { width: 2px; height: 29px; background: #111; margin-left: 0; }
                .pick { margin-left: auto; margin-right: 44px; width: 60px; height: 38px; padding-right: 6px; border: 1px solid #e8e8e8; border-radius: 19px; box-sizing: border-box; box-shadow: 0 1px 2px rgba(0,0,0,.05); display: flex; align-items: center; justify-content: center; gap: 1px; color: #222; }
                .adds { display: flex; align-items: center; height: 28px; margin-top: 12px; font-size: 19.500px; color: #6b6b6b; padding-left: 8px; }
                .adds span { display: flex; align-items: center; gap: 7px; margin-right: 27px; }
                .card { margin-top: 13px; border: 1px solid #ececec; border-radius: 14px; box-sizing: border-box; }
                .grid { display: grid; grid-template-columns: 420px 380px; grid-auto-rows: min-content; row-gap: 19px; padding: 22px 0 46px 26px; border-bottom: 1px solid #ececec; }
                .ppl { display: inline-flex; align-items: center; vertical-align: top; height: 26px; margin-left: 18px; }
                .av { width: 40px; height: 40px; border-radius: 50%; background: #6f5fd8; color: #e8e6fa; font-size: 15px; display: flex; align-items: center; justify-content: center; flex: none; }
                .ghost { width: 38px; height: 38px; border: 1.500px dashed #d0d0d0; border-radius: 50%; box-sizing: border-box; margin-left: 0; display: flex; align-items: center; justify-content: center; color: #c6c6c6; position: relative; flex: none; }
                .ghost i { position: absolute; right: -1px; bottom: -2px; width: 18px; height: 18px; border-radius: 50%; background: #bcbcbc; color: #fff; display: flex; align-items: center; justify-content: center; }
                .pub { padding: 25px 0 0 26px; height: 114px; box-sizing: border-box; }
                .pubrow { display: flex; align-items: center; height: 26px; font-size: 22px; color: #56585c; gap: 20px; }
                .toggle { width: 38px; height: 22px; border-radius: 11px; background: #8b8b8b; position: relative; }
                .toggle i { position: absolute; left: 2px; top: 2px; width: 18px; height: 18px; border-radius: 50%; background: #fff; }
                .hint { margin: 15px 0 0 58px; font-size: 19px; line-height: 22px; color: #8d8d8d; }
                .seg { display: flex; height: 50px; margin: 13px 14px 0; background: #f0f0f0; border-radius: 10px; font-size: 22px; color: #6f7175; padding: 2px; box-sizing: border-box; }
                .seg div { flex: 1; display: flex; align-items: center; justify-content: center; gap: 6px; border-radius: 9px; }
                .seg .on { background: #fff; color: #3a3c40; box-shadow: 0 1px 2px rgba(0,0,0,.12); font-weight: 400; }
                .desc { margin: 26px 0 0 26px; font-size: 19.600px; line-height: 26px; color: #54565a; }
                footer { display: flex; align-items: center; height: 95px; flex: none; border-top: 1px solid #e8e8e8; box-sizing: border-box; background: #fcfcfc; padding: 0 27px 2px 40px; font-size: 22px; color: #57595d; }
                .upd { display: flex; align-items: center; gap: 9px; font-size: 22.300px; }
                .cancel { margin-left: auto; margin-right: 32px; }
                .save { width: 191px; height: 52px; border-radius: 13px; background: #2b2b2f; color: #fff; font-weight: 500; display: flex; align-items: center; justify-content: center; }
            </style>
            <header><h1>Save as new Space Template</h1><div class="close"><ui-icon name="close" size="20" sw="2"></ui-icon></div></header>
            <main>
                <div class="label">Template name<b>*</b></div>
                <div class="input"><ui-icon class="pl" name="planet" size="20" sw="1.700"></ui-icon>Team Template - Practice<span class="caret"></span>
                    <div class="pick"><ui-icon name="mountain" size="28"></ui-icon><ui-icon name="chev" size="10" sw="3.500"></ui-icon></div></div>
                <div class="adds"><span><ui-icon name="plus" size="14" sw="2"></ui-icon>Add description</span><span><ui-icon name="plus" size="14" sw="2"></ui-icon>Add tags</span></div>
                <div class="label" style="margin-top:44px">Share with</div>
                <div class="card">
                    <div class="grid">
                        <share-option checked>All members</share-option>
                        <share-option>Everyone (including guests and limited members)</share-option>
                        <share-option>Only me</share-option>
                        <share-option>Admins only</share-option>
                        <share-option>Select people<span class="ppl"><span class="av">A</span><span class="ghost"><ui-icon name="personadd" size="24" sw="1.600"></ui-icon><i><ui-icon name="plus" size="12" sw="3.500"></ui-icon></i></span></span></share-option>
                    </div>
                    <div class="pub">
                        <div class="pubrow"><span class="toggle"><i></i></span>Public sharing</div>
                        <div class="hint">Save to create public link.</div>
                    </div>
                </div>
                <div class="label" style="margin-top:41px">Import options</div>
                <div class="card" style="margin-top:13px;height:142px">
                    <div class="seg">
                        <div class="on"><ui-icon name="spark" size="21" sw="1.800"></ui-icon>Import everything</div>
                        <div><ui-icon name="sliders" size="21" sw="1.800"></ui-icon>Customize import items</div>
                    </div>
                    <div class="desc">All properties, fields and settings will be imported exactly as is.</div>
                </div>
            </main>
            <footer>
                <span class="upd"><ui-icon name="sync" size="22" sw="1.900"></ui-icon>Update an existing Template</span>
                <span class="cancel">Cancel</span>
                <span class="save">Save Template</span>
            </footer>`;
    }
}
customElements.define("save-dialog", SaveDialog);

class AppPage extends HTMLElement {
    connectedCallback() {
        this.attachShadow({mode: "open"}).innerHTML = `
            <style>
                :host { display: block; position: relative; width: 3024px; height: 1646px; background: #a7a7a7; overflow: hidden; font-family: Inter, "Liberation Sans", sans-serif; }
                .work { display: flex; height: 1569px; }
                .panel { display: flex; flex: 1; margin-right: 11px; border: 1px solid #a0a0a0; border-bottom-width: 2px; border-radius: 14px 10px 14px 14px; box-sizing: border-box; }
            </style>
            <top-bar></top-bar>
            <div class="work">
                <nav-rail>
                    <rail-item icon="home" active>Home</rail-item>
                    <rail-item icon="planner">Planner</rail-item>
                    <rail-item icon="brain">Brain</rail-item>
                    <rail-item icon="teams">Teams</rail-item>
                    <rail-item icon="doc">Docs</rail-item>
                    <rail-item icon="dash">Dashboa..</rail-item>
                    <rail-item icon="board">Whitebo..</rail-item>
                    <rail-item icon="forms">Forms</rail-item>
                    <rail-item icon="video">Clips</rail-item>
                    <rail-item icon="goals">Goals</rail-item>
                    <rail-item icon="clock">Timeshe..</rail-item>
                    <rail-item icon="grid">More</rail-item>
                    <rail-item slot="bottom" icon="invite" h="89">Invite</rail-item>
                    <rail-item slot="bottom" icon="upgrade" h="89">Upgrade</rail-item>
                </nav-rail>
                <div class="panel">
                    <side-bar></side-bar>
                    <main-view></main-view>
                </div>
            </div>
            <save-dialog></save-dialog>`;
    }
}
customElements.define("app-page", AppPage);
</script>
</body>
</html>
